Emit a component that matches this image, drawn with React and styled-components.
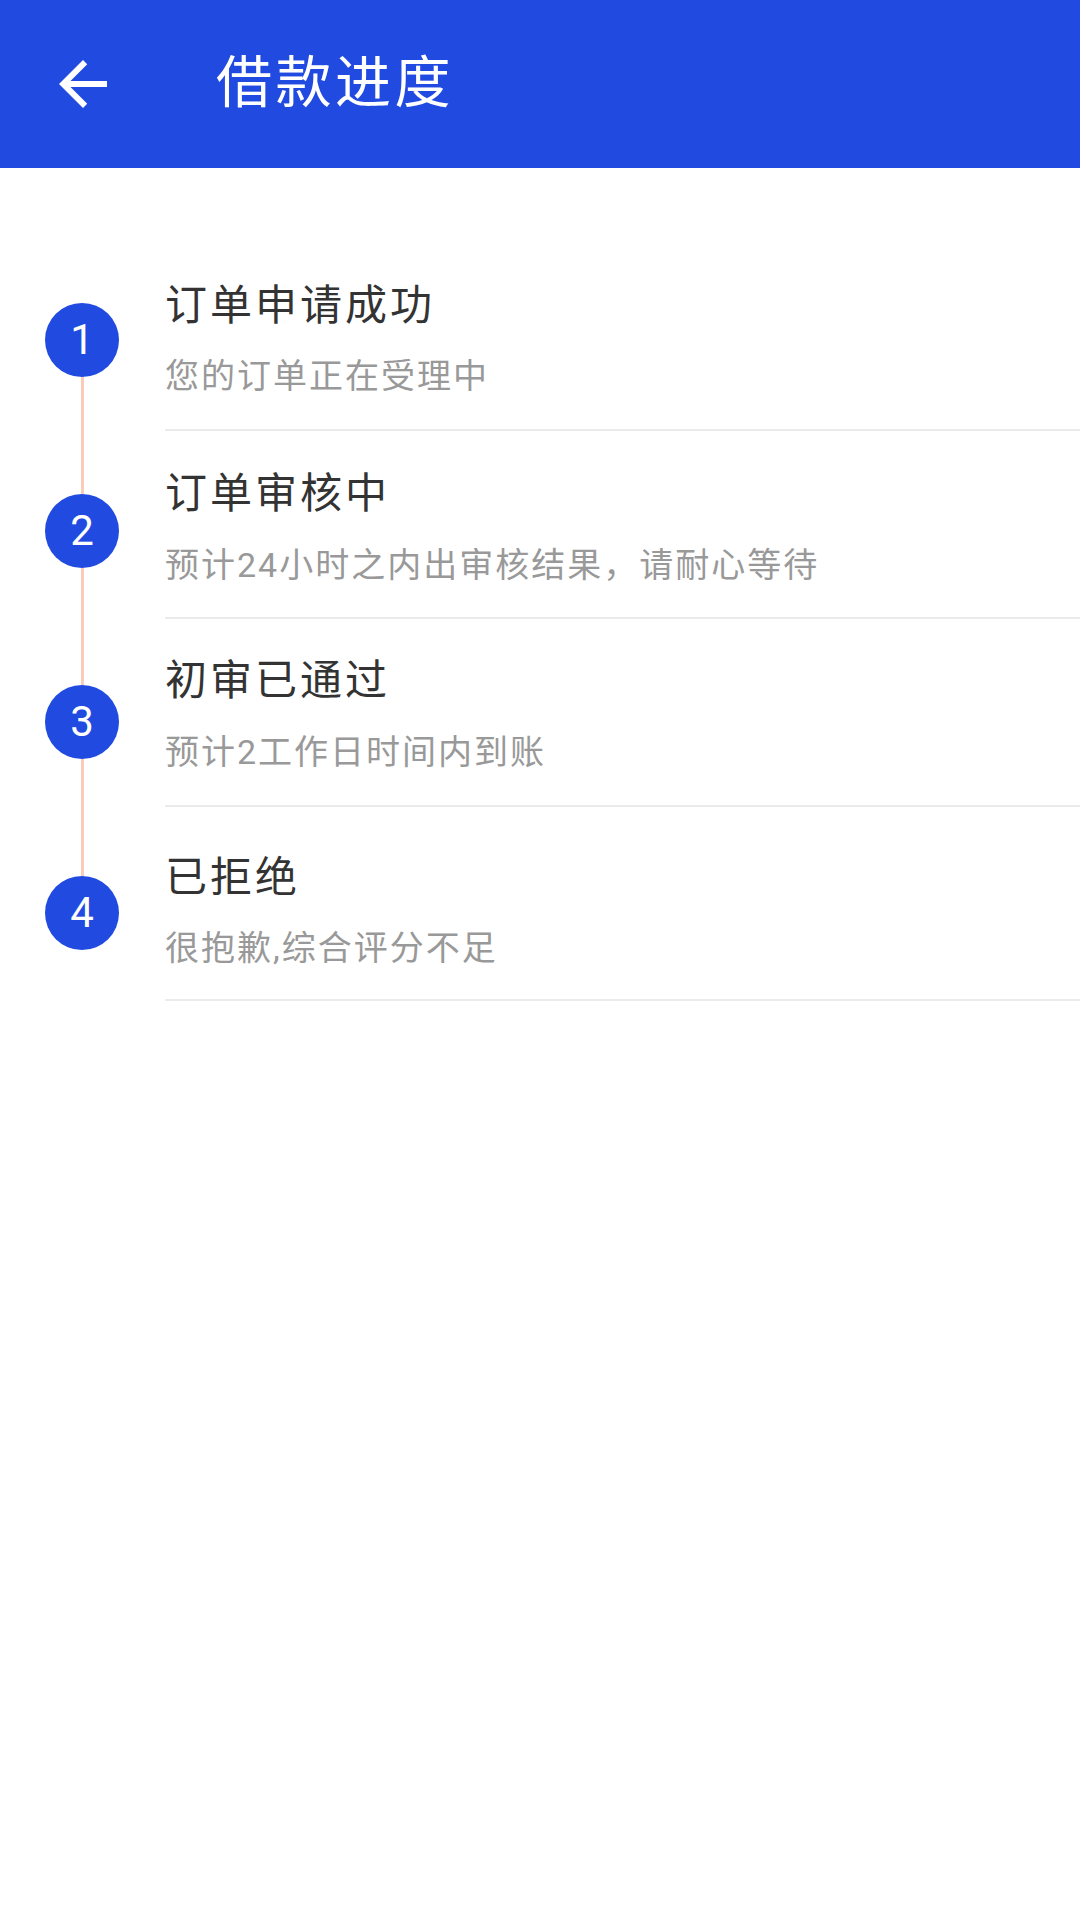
import React from "react";
import styled, { createGlobalStyle } from "styled-components";

const Global = createGlobalStyle`
  html, body { margin: 0; padding: 0; background: #ffffff; }
  body { font-family: Roboto, "Noto Sans CJK SC", sans-serif; }
  * { box-sizing: border-box; }
`;

const Screen = styled.div`
  width: 1080px;
  min-height: 1920px;
  background: #ffffff;
  display: flex;
  flex-direction: column;
`;

const AppBar = styled.header`
  height: 168px;
  background: #214ae1;
  display: flex;
  align-items: center;
  padding-left: 47px;
`;

const BackButton = styled.button`
  width: 72px;
  height: 72px;
  padding: 0;
  border: 0;
  background: transparent;
  display: flex;
  align-items: center;
  justify-content: center;
  margin-right: 97px;
`;

const BarTitle = styled.h1`
  margin: 0;
  color: #ffffff;
  font-family: Roboto, "Noto Sans CJK SC", sans-serif;
  font-size: 56px;
  font-weight: 400;
  line-height: 1.2;
  letter-spacing: 3.5px;
`;

const Body = styled.main`
  display: flex;
  align-items: flex-start;
`;

const Rail = styled.div`
  width: 165px;
  flex: 0 0 165px;
  padding: 135px 0 0 45px;
`;

const Track = styled.div`
  width: 74px;
  display: flex;
  flex-direction: column;
  align-items: center;
`;

const Dot = styled.div`
  width: 74px;
  height: 74px;
  border-radius: 50%;
  background: #214ae1;
  color: #ffffff;
  display: flex;
  align-items: center;
  justify-content: center;
  font-family: Roboto, sans-serif;
  font-size: 42px;
  font-weight: 400;
  line-height: 1;
`;

const Segment = styled.div`
  width: 3px;
  height: 117px;
  background: #fbcbb9;
`;

const List = styled.div`
  flex: 1;
  padding-top: 74px;
  display: flex;
  flex-direction: column;
`;

const Step = styled.div`
  padding-top: ${(p) => p.$top}px;
  padding-bottom: ${(p) => p.$bottom}px;
  border-bottom: 2px solid #ebebeb;
  display: flex;
  flex-direction: column;
  gap: 25px;
`;

const StepTitle = styled.div`
  color: #333333;
  font-size: 42px;
  line-height: 1.2;
  font-weight: 400;
  letter-spacing: 3px;
`;

const StepNote = styled.div`
  color: #999999;
  font-size: 34px;
  line-height: 1.2;
  font-weight: 400;
  letter-spacing: 2px;
`;

const steps = [
  { title: "订单申请成功", note: "您的订单正在受理中", top: 39, bottom: 32 },
  { title: "订单审核中", note: "预计24小时之内出审核结果，请耐心等待", top: 38, bottom: 32 },
  { title: "初审已通过", note: "预计2工作日时间内到账", top: 37, bottom: 32 },
  { title: "已拒绝", note: "很抱歉,综合评分不足", top: 46, bottom: 30 },
];

export default function App() {
  return (
    <Screen>
      <Global />
      <AppBar>
        <BackButton aria-label="back">
          <svg width="72" height="72" viewBox="0 0 24 24" fill="#ffffff">
            <path d="M20 11H7.83l5.59-5.59L12 4l-8 8 8 8 1.41-1.41L7.83 13H20v-2z" />
          </svg>
        </BackButton>
        <BarTitle>借款进度</BarTitle>
      </AppBar>
      <Body>
        <Rail>
          <Track>
            {steps.map((s, i) => (
              <React.Fragment key={i}>
                {i > 0 && <Segment />}
                <Dot>{i + 1}</Dot>
              </React.Fragment>
            ))}
          </Track>
        </Rail>
        <List>
          {steps.map((s, i) => (
            <Step key={i} $top={s.top} $bottom={s.bottom}>
              <StepTitle>{s.title}</StepTitle>
              <StepNote>{s.note}</StepNote>
            </Step>
          ))}
        </List>
      </Body>
    </Screen>
  );
}
